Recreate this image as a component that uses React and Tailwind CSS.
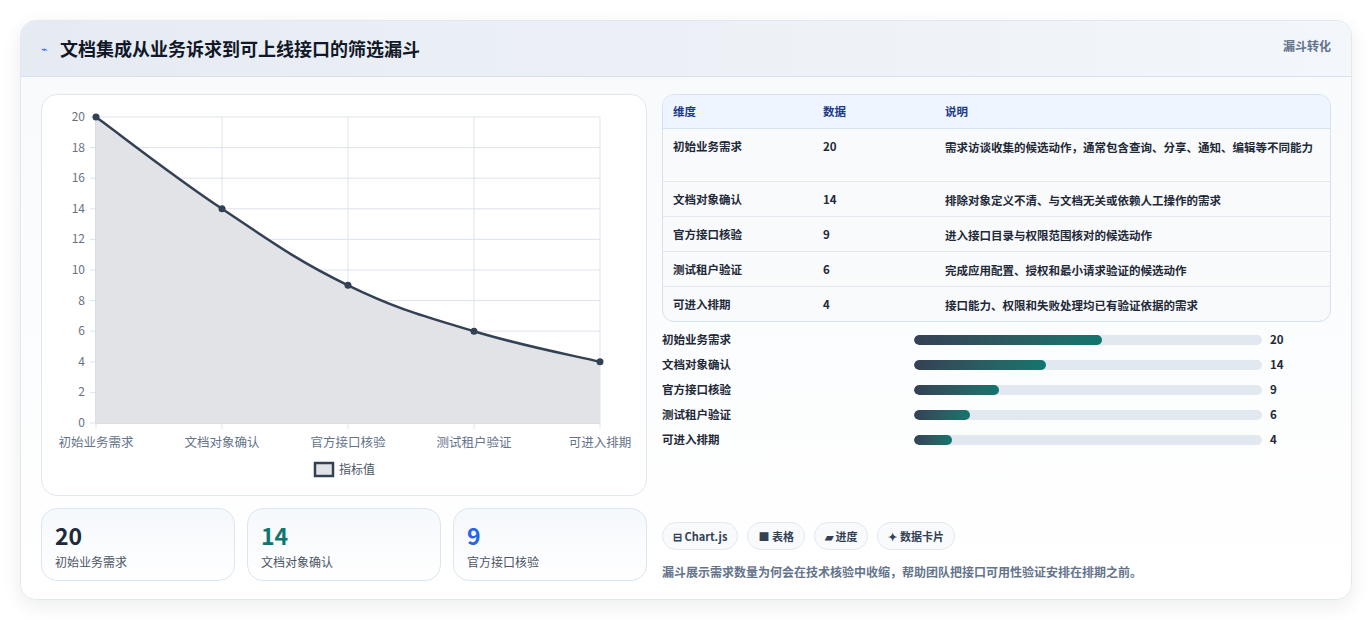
import React from 'react';

const rows = [
  { name: '初始业务需求', value: 20, desc: '需求访谈收集的候选动作，通常包含查询、分享、通知、编辑等不同能力' },
  { name: '文档对象确认', value: 14, desc: '排除对象定义不清、与文档无关或依赖人工操作的需求' },
  { name: '官方接口核验', value: 9, desc: '进入接口目录与权限范围核对的候选动作' },
  { name: '测试租户验证', value: 6, desc: '完成应用配置、授权和最小请求验证的候选动作' },
  { name: '可进入排期', value: 4, desc: '接口能力、权限和失败处理均已有验证依据的需求' },
];

const font = { fontFamily: '"Noto Sans CJK SC", "Noto Sans", sans-serif' };

function Chart() {
  const x0 = 54, x1 = 558, yTop = 22, yBot = 328;
  const pts = rows.map((r, i) => [x0 + (i * (x1 - x0)) / 4, yBot - (r.value / 20) * (yBot - yTop)]);
  // smooth curve through points
  let d = `M${pts[0][0]},${pts[0][1]}`;
  for (let i = 0; i < pts.length - 1; i++) {
    const p0 = pts[i - 1] || pts[i], p1 = pts[i], p2 = pts[i + 1], p3 = pts[i + 2] || p2;
    const t = 0.2;
    const c1 = [p1[0] + (p2[0] - p0[0]) * t, p1[1] + (p2[1] - p0[1]) * t];
    const c2 = [p2[0] - (p3[0] - p1[0]) * t, p2[1] - (p3[1] - p1[1]) * t];
    d += ` C${c1[0]},${c1[1]} ${c2[0]},${c2[1]} ${p2[0]},${p2[1]}`;
  }
  const area = `${d} L${x1},${yBot} L${x0},${yBot} Z`;
  const ticks = [0, 2, 4, 6, 8, 10, 12, 14, 16, 18, 20];
  return (
    <svg width="606" height="400" viewBox="0 0 606 400" style={font}>
      {ticks.map((t) => {
        const y = yBot - (t / 20) * (yBot - yTop);
        return (
          <g key={t}>
            <line x1={x0 - 6} x2={x1} y1={y} y2={y} stroke="#dde3ec" />
            <text x={43} y={y + 4} textAnchor="end" fontSize="12" fill="#6b7280">{t}</text>
          </g>
        );
      })}
      {pts.map((p, i) => (
        <line key={i} x1={p[0]} x2={p[0]} y1={yTop} y2={yBot + 6} stroke="#dde3ec" />
      ))}
      <line x1={x0} x2={x1} y1={yBot} y2={yBot} stroke="#c5ccd8" />
      <line x1={x0} x2={x0} y1={yTop} y2={yBot} stroke="#c5ccd8" />
      <path d={area} fill="#e2e3e6" />
      <path d={d} fill="none" stroke="#334155" strokeWidth="2.5" />
      {pts.map((p, i) => (
        <circle key={i} cx={p[0]} cy={p[1]} r="3.5" fill="#334155" />
      ))}
      {rows.map((r, i) => (
        <text key={r.name} x={pts[i][0]} y={352} textAnchor="middle" fontSize="12.5" fill="#64748b">{r.name}</text>
      ))}
      <rect x={273} y={368} width={18} height={13} fill="#e2e3e6" stroke="#334155" strokeWidth="2.5" />
      <text x={297} y={379} fontSize="12" fill="#4b5563">指标值</text>
    </svg>
  );
}

export default function App() {
  return (
    <div className="min-h-screen bg-white p-5" style={font}>
      <div className="h-[580px] rounded-2xl border border-slate-200 bg-white shadow-[0_6px_20px_rgba(15,23,42,0.08)] overflow-hidden flex flex-col">
        <div className="h-[56px] shrink-0 flex items-center justify-between px-5 bg-gradient-to-r from-[#e6ebf3] to-[#f3f6fa] border-b border-[#d6e2f0]">
          <div className="flex items-center gap-3">
            <span className="text-[11px] text-[#2563eb]">⌁</span>
            <h1 className="text-[18px] font-bold text-[#111827]">文档集成从业务诉求到可上线接口的筛选漏斗</h1>
          </div>
          <span className="text-[12px] font-bold text-[#64748b] self-start mt-4">漏斗转化</span>
        </div>
        <div className="flex-1 flex gap-[15px] px-5 pt-[17px] pb-[18px] bg-gradient-to-b from-[#f8fafc] to-white">
          <div className="w-[606px] flex flex-col gap-3">
            <div className="h-[402px] rounded-2xl border border-[#e2e8f0] bg-white overflow-hidden">
              <Chart />
            </div>
            <div className="grid grid-cols-3 gap-3">
              {[['20', 'text-[#1e293b]', rows[0].name], ['14', 'text-[#0f766e]', rows[1].name], ['9', 'text-[#2563eb]', rows[2].name]].map(([v, c, n]) => (
                <div key={n} className="h-[73px] rounded-2xl border border-[#dbe6f3] bg-gradient-to-b from-[#f5f8fc] to-white px-[13px] pt-[12px]">
                  <div className={`text-[23px] font-bold leading-7 ${c}`}>{v}</div>
                  <div className="text-[12px] text-[#4b5563] mt-1">{n}</div>
                </div>
              ))}
            </div>
          </div>
          <div className="flex-1 flex flex-col">
            <div className="rounded-xl border border-[#d6e2f0] overflow-hidden bg-[#f8fafc]">
              <table className="w-full text-[11.5px] text-[#1f2937]">
                <thead>
                  <tr className="bg-[#eef5ff] h-[33px] text-[#1e3a8a] text-left border-b border-[#d6e2f0]">
                    <th className="font-bold pl-[10px] w-[160px]">维度</th>
                    <th className="font-bold w-[122px]">数据</th>
                    <th className="font-bold">说明</th>
                  </tr>
                </thead>
                <tbody>
                  {rows.map((r, i) => (
                    <tr key={r.name} className={`border-t border-[#e2e8f0] align-top ${i === 0 ? 'h-[53px]' : 'h-[35px]'}`}>
                      <td className="pl-[10px] pt-[9px] font-semibold">{r.name}</td>
                      <td className="pt-[9px] font-semibold">{r.value}</td>
                      <td className="pt-[9px] pr-4 leading-[18px] font-semibold">{r.desc}</td>
                    </tr>
                  ))}
                </tbody>
              </table>
            </div>
            <div className="mt-[11px] flex flex-col gap-[11px]">
              {rows.map((r) => (
                <div key={r.name} className="flex items-center h-[14px] text-[11.5px] font-semibold text-[#1f2937]">
                  <span className="w-[252px]">{r.name}</span>
                  <div className="w-[348px] h-[10px] rounded-full bg-[#e2e8f0] overflow-hidden">
                    <div className="h-full rounded-full bg-gradient-to-r from-[#334155] to-[#0f766e]" style={{ width: `${r.value * 2.7}%` }} />
                  </div>
                  <span className="ml-2 font-bold">{r.value}</span>
                </div>
              ))}
            </div>
            <div className="mt-auto flex gap-[9px]">
              {['⊟ Chart.js', '■ 表格', '▰ 进度', '✦ 数据卡片'].map((c) => (
                <span key={c} className="h-[28px] px-[10px] flex items-center rounded-full border border-[#e2e8f0] bg-[#f8fafc] text-[11px] font-bold text-[#334155]">{c}</span>
              ))}
            </div>
            <p className="mt-[13px] text-[12px] text-[#64748b] font-semibold">漏斗展示需求数量为何会在技术核验中收缩，帮助团队把接口可用性验证安排在排期之前。</p>
          </div>
        </div>
      </div>
    </div>
  );
}
